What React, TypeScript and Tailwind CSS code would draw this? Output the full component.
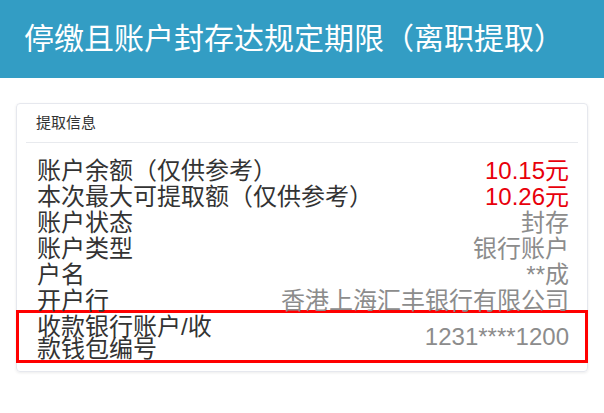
import React from 'react';

const rows = [
  { label: '账户余额（仅供参考）', value: '10.15元', red: true },
  { label: '本次最大可提取额（仅供参考）', value: '10.26元', red: true },
  { label: '账户状态', value: '封存' },
  { label: '账户类型', value: '银行账户' },
  { label: '户名', value: '**成' },
  { label: '开户行', value: '香港上海汇丰银行有限公司' },
];

function App() {
  return (
    <div
      className="min-h-screen bg-white"
      style={{ fontFamily: '"Liberation Sans", "Noto Sans CJK SC", sans-serif' }}
    >
      {/* Header */}
      <header className="h-[78px] bg-[#339dc4] flex items-center pl-[24px]">
        <h1 className="text-[30px] leading-none text-white">停缴且账户封存达规定期限（离职提取）</h1>
      </header>

      {/* Card */}
      <main className="px-[16px] pt-[25px]">
        <div className="border border-[#e6e8ee] rounded-[4px] shadow-[0_1px_3px_rgba(0,0,0,0.08)] px-[9px] pb-[8px]">
          <div className="h-[39px] flex items-center px-[10px] border-b border-[#e8eaee] text-[15px] text-[#333]">
            提取信息
          </div>
          <div className="pt-[11px]">
            {rows.map((row) => (
              <div key={row.label} className="flex justify-between h-[26px] pt-[7px] pl-[11px] pr-[9px] text-[24px] leading-[19px]">
                <span className="text-[#333]">{row.label}</span>
                <span className={row.red ? 'text-[#e8000b]' : 'text-[#8c8c8c]'}>{row.value}</span>
              </div>
            ))}
            <div className="-mx-[10px] border-[3px] border-[#ff0000] h-[53px] flex items-center justify-between pl-[18px] pr-[16px] text-[24px]">
              <span className="w-[180px] leading-[22px] pt-[2px] text-[#333]">收款银行账户/收款钱包编号</span>
              <span className="text-[#8c8c8c] leading-[26px]">1231****1200</span>
            </div>
          </div>
        </div>
      </main>
    </div>
  );
}

export default App;
